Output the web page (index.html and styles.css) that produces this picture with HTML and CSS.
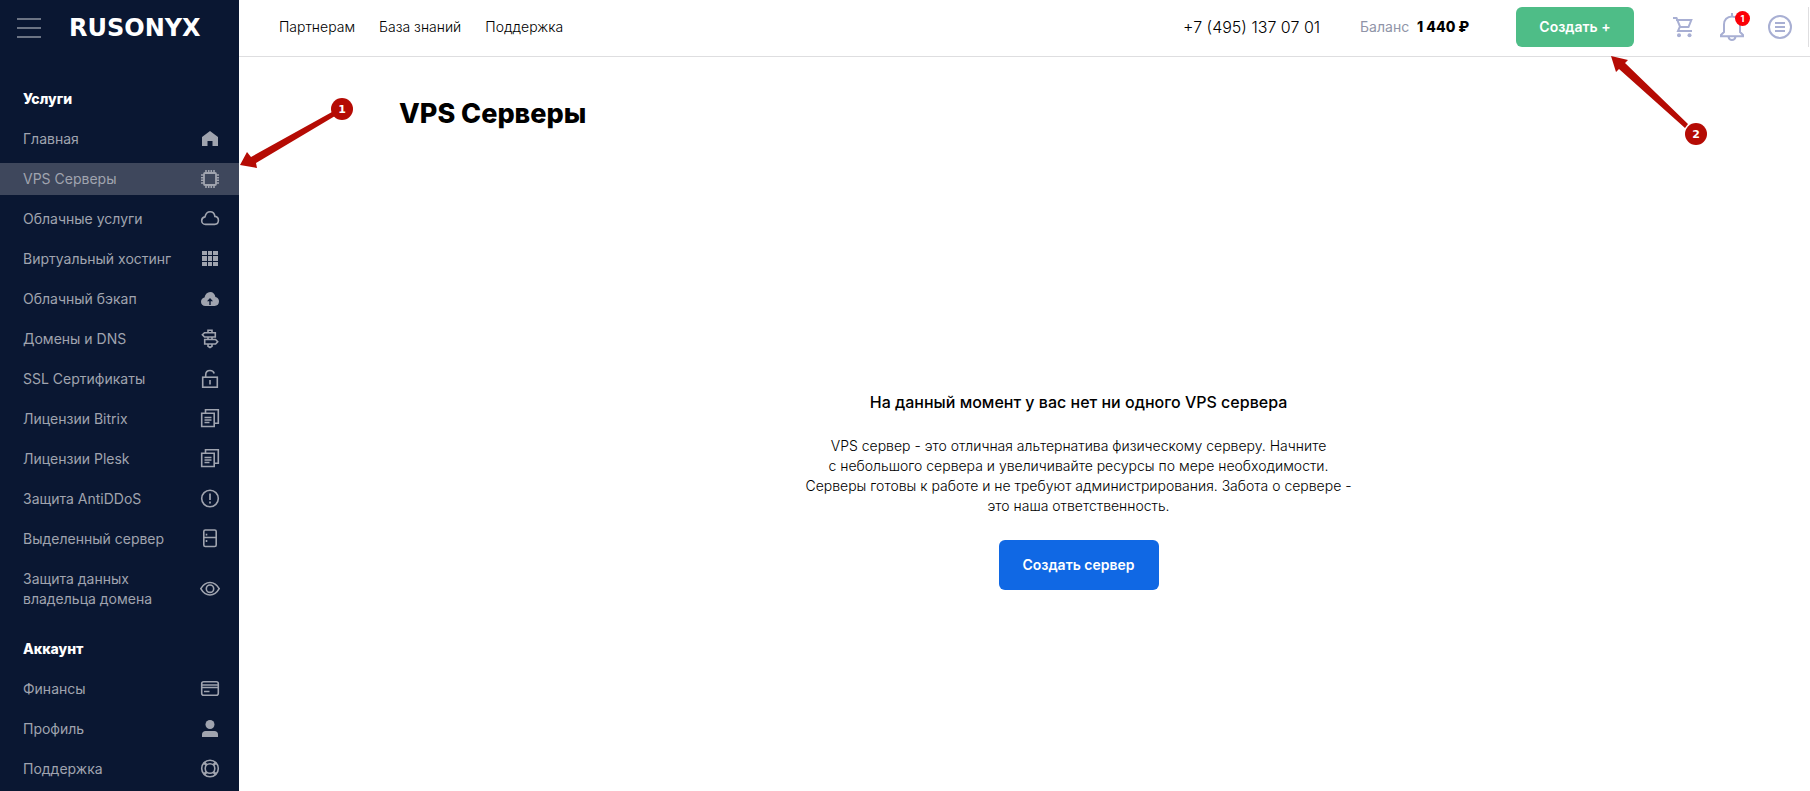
FILE: index.html
```
<!DOCTYPE html>
<html lang="ru">
<head>
    <meta charset="UTF-8">
    <meta name="viewport" content="width=device-width, initial-scale=1.0">
    <title>VPS Серверы</title>
    <link rel="stylesheet" href="styles.css">
</head>
<body>

    <aside class="sidebar">
        <div class="sidebar-top">
            <button type="button" class="burger" aria-label="Меню"><span></span><span></span><span></span></button>
            <a href="#" class="logo">RUSONYX</a>
        </div>

        <nav class="menu">
            <h2>Услуги</h2>
            <a href="#">Главная
                <svg viewBox="0 0 20 20"><path class="fill" d="M10 2 18 8V17H12.500V12H7.500V17H2V8Z"/></svg>
            </a>
            <a href="#" class="active">VPS Серверы
                <svg viewBox="0 0 20 20"><rect x="4" y="4" width="12" height="12" rx="1" stroke-width="1.800"/><path d="M6 1V4M8.700 1V4M11.300 1V4M14 1V4M6 16V19M8.700 16V19M11.300 16V19M14 16V19M1 6H4M1 8.700H4M1 11.300H4M1 14H4M16 6H19M16 8.700H19M16 11.300H19M16 14H19"/></svg>
            </a>
            <a href="#">Облачные услуги
                <svg viewBox="0 0 20 20"><path d="M5.500 15.400C3.200 15.400 1.700 13.700 1.700 11.700C1.700 9.700 3 8.200 5 7.900C5.600 5 7.500 2.800 10.200 2.800C12.800 2.800 14.500 4.600 14.900 7.400C17 7.600 18.400 9.200 18.400 11.300C18.400 13.700 16.800 15.400 14.600 15.400Z"/></svg>
            </a>
            <a href="#">Виртуальный хостинг
                <svg viewBox="0 0 20 20"><path class="fill" d="M2 2H7V6H2ZM8 2H12V6H8ZM13 2H18V6H13ZM2 7H7V12H2ZM8 7H12V12H8ZM13 7H18V12H13ZM2 13H7V17H2ZM8 13H12V17H8ZM13 13H18V17H13Z"/></svg>
            </a>
            <a href="#">Облачный бэкап
                <svg viewBox="0 0 20 20"><path class="fill" fill-rule="evenodd" d="M5.500 17C2.700 17 1 15.200 1 12.800C1 10.600 2.400 9 4.500 8.500C5.200 5.200 7.300 3 10.200 3C13 3 15 5 15.400 8C17.600 8.400 19 10 19 12.300C19 15.100 17.300 17 14.600 17ZM10 9 7 12.300H9.300V16H10.700V12.300H13Z"/></svg>
            </a>
            <a href="#">Домены и DNS
                <svg viewBox="0 0 20 20"><path d="M8 3.500V1.200H12V3.500M4.500 3.700H15.300V8H4.500L2.400 5.800ZM8 8V10.200M12 8V10.200M4.700 10.500H15.600L17.700 12.700 15.600 15H4.700ZM8 15.200V17.300L10 18.500 12 17.300V15.200"/></svg>
            </a>
            <a href="#">SSL Сертификаты
                <svg viewBox="0 0 20 20"><rect x="2.700" y="8.200" width="14.600" height="10"/><path d="M5.700 8V6C5.700 3.300 7.500 1.500 10 1.500C12.200 1.500 13.700 2.700 14.200 4.500M10 11V15.500"/></svg>
            </a>
            <a href="#">Лицензии Bitrix
                <svg viewBox="0 0 20 20"><path d="M1.700 4.200H14.200V17.500H1.700ZM5.500 4V.8H18.300V14.300H14.500M4.500 8.500H11.500M4.500 11H11.500M4.500 13.500H9.500"/></svg>
            </a>
            <a href="#">Лицензии Plesk
                <svg viewBox="0 0 20 20"><path d="M1.700 4.200H14.200V17.500H1.700ZM5.500 4V.8H18.300V14.300H14.500M4.500 8.500H11.500M4.500 11H11.500M4.500 13.500H9.500"/></svg>
            </a>
            <a href="#">Защита AntiDDoS
                <svg viewBox="0 0 20 20"><circle cx="10" cy="9.500" r="8.300"/><path d="M10 4.500V11M10 12.500V14.500" stroke-width="1.700"/></svg>
            </a>
            <a href="#">Выделенный сервер
                <svg viewBox="0 0 20 20"><rect x="3.800" y="1" width="12.400" height="16.500" rx="1.500"/><path d="M4 8.500H16M6.500 4.800V6.500M6.500 11V13"/></svg>
            </a>
            <a href="#">Защита данных<br>владельца домена
                <svg viewBox="0 0 20 20"><path d="M.8 9.700C3 5.800 6.200 3.500 10 3.500S17 5.800 19.200 9.700C17 13.600 13.800 16 10 16S3 13.600.8 9.700Z"/><circle cx="10" cy="9.700" r="3.700"/></svg>
            </a>

            <h2 class="second">Аккаунт</h2>
            <a href="#">Финансы
                <svg viewBox="0 0 20 20"><rect x="1.700" y="2.700" width="16.600" height="13.600" rx="2"/><path d="M2 6H18M2 8.500H18M4 12.500H9.500"/></svg>
            </a>
            <a href="#">Профиль
                <svg viewBox="0 0 20 20"><circle class="fill" cx="10" cy="5.500" r="4.500"/><path class="fill" d="M2 18V15.500C2 13.300 3.500 12 5.500 12H14.500C16.500 12 18 13.300 18 15.500V18Z"/></svg>
            </a>
            <a href="#">Поддержка
                <svg viewBox="0 0 20 20"><circle cx="10" cy="9.500" r="8.300"/><circle cx="10" cy="9.500" r="4.800"/><path d="M4 3.500 6.700 6.200M16 3.500 13.300 6.200M4 15.500 6.700 12.800M16 15.500 13.300 12.800" stroke-width="2.500"/></svg>
            </a>
        </nav>
    </aside>

    <div class="page">
        <header>
            <nav class="links">
                <a href="#">Партнерам</a>
                <a href="#">База знаний</a>
                <a href="#">Поддержка</a>
            </nav>
            <a href="tel:+74951370701" class="phone">+7 (495) 137 07 01</a>
            <div class="balance">Баланс <b>1 440 ₽</b></div>
            <button type="button" class="create">Создать +</button>
            <div class="tools">
                <button type="button" aria-label="Корзина">
                    <svg viewBox="0 0 24 24"><path d="M1 3H4.500L8 11.500 6 16H20M4 5H19.300L16.500 12H8"/><circle class="dot" cx="7" cy="20.200" r="2"/><circle class="dot" cx="17.500" cy="20.200" r="2"/></svg>
                </button>
                <button type="button" aria-label="Уведомления">
                    <svg class="bell" viewBox="0 0 24 28"><path d="M12 0V3.500M12 3.500C7 3.500 4 7 4 11.500V19L1 22V23.300H23V22L20 19V11.500C20 7 17 3.500 12 3.500ZM8.500 24C9 26 10.300 27 12 27S15 26 15.500 24"/></svg>
                    <span class="badge">1</span>
                </button>
                <button type="button" aria-label="Меню аккаунта">
                    <svg viewBox="0 0 24 24"><circle cx="12" cy="12" r="11"/><path d="M7 8H17M7 12H17M7 16H17"/></svg>
                </button>
            </div>
        </header>

        <main>
            <h1>VPS Серверы</h1>
            <section class="empty">
                <h3>На данный момент у вас нет ни одного VPS сервера</h3>
                <p>VPS сервер - это отличная альтернатива физическому серверу. Начните<br>
                    с небольшого сервера и увеличивайте ресурсы по мере необходимости.<br>
                    Серверы готовы к работе и не требуют администрирования. Забота о сервере -<br>
                    это наша ответственность.</p>
                <button type="button" class="create-server">Создать сервер</button>
            </section>
        </main>
    </div>

    <!-- Numbered hints over the page -->
    <svg class="hint hint-menu" viewBox="0 0 114 72" width="114" height="72">
        <path d="M93 14 96 18 17 65 18 70 1 67 8 54 12 59Z"/>
        <circle cx="103" cy="11" r="11"/>
        <text x="103" y="15">1</text>
    </svg>
    <svg class="hint hint-create" viewBox="0 0 96 90" width="96" height="90">
        <path d="M77 68 74 72 8 13 5 16 0 0 17 4 14 7Z"/>
        <circle cx="85" cy="78" r="11"/>
        <text x="85" y="82">2</text>
    </svg>

</body>
</html>
```
FILE: styles.css
```
body {
    display: flex;
    min-height: 100vh;
    margin: 0;
    position: relative;
    font-family: Inter, "Open Sans", sans-serif;
    font-size: 14px;
    line-height: 20px;
    color: #000;
    background-color: #fff;
}

* {
    box-sizing: border-box;
}

a {
    color: inherit;
    text-decoration: none;
}

button {
    padding: 0;
    border: none;
    background: none;
    font: inherit;
    cursor: pointer;
}

svg {
    fill: none;
    stroke: currentColor;
}

/* Sidebar */
.sidebar {
    flex: 0 0 239px;
    background-color: #0a1732;
    color: #a0a4af;
}

.sidebar-top {
    display: flex;
    align-items: center;
    gap: 28px;
    height: 55px;
    padding-left: 17px;
}

.burger {
    display: grid;
    gap: 7px;
    width: 24px;
}

.burger span {
    height: 2px;
    background-color: #6c7484;
}

.logo {
    font-family: "DejaVu Sans", sans-serif;
    font-size: 24px;
    font-weight: bold;
    color: #fff;
}

.menu {
    display: grid;
    gap: 8px;
    padding: 28px 0 6px;
}

.menu h2 {
    margin: 0;
    padding: 6px 23px;
    font-size: 14px;
    font-weight: 800;
    color: #fff;
}

.menu .second {
    margin-top: 10px;
}

.menu a {
    display: flex;
    align-items: center;
    padding: 6px 19px 6px 23px;
}

.menu .active {
    background-color: #3e475c;
}

.menu svg {
    width: 20px;
    height: 20px;
    margin-left: auto;
    stroke-width: 1.6;
}

.menu .fill {
    fill: currentColor;
    stroke: none;
}

/* Header */
.page {
    flex: 1;
    display: flex;
    flex-direction: column;
}

header {
    display: flex;
    align-items: center;
    height: 57px;
    padding: 0 1px 2px 40px;
    border-bottom: 1px solid #dedee0;
}

.links {
    display: flex;
    gap: 24px;
    margin-right: auto;
    font-weight: 300;
}

.phone {
    font-size: 16px;
    font-weight: 300;
}

.balance {
    margin: 0 47px 0 40px;
    color: #9094a8;
}

.balance b {
    margin-left: 4px;
    font-weight: 800;
    color: #000;
}

.create {
    width: 118px;
    height: 40px;
    border-radius: 6px;
    background-color: #4ebd87;
    font-weight: 600;
    color: #fff;
}

.tools {
    display: flex;
    align-items: center;
    gap: 24px;
    height: 40px;
    margin-left: 38px;
    padding-right: 16px;
    border-right: 1px solid #dedee0;
    color: #a8afd3;
}

.tools button {
    display: flex;
    position: relative;
    color: inherit;
}

.tools svg {
    width: 24px;
    height: 24px;
    stroke-width: 2;
}

.tools .bell {
    height: 28px;
}

.tools .dot {
    fill: currentColor;
    stroke: none;
}

.badge {
    position: absolute;
    top: -2px;
    right: -6px;
    width: 15px;
    height: 15px;
    border-radius: 50%;
    background-color: #fb0007;
    font-size: 9px;
    font-weight: bold;
    line-height: 15px;
    color: #fff;
}

/* Content */
main {
    flex: 1;
    padding: 39px 52px 40px 160px;
}

h1 {
    margin: 0;
    font-size: 27px;
    font-weight: 800;
    line-height: 36px;
}

.empty {
    padding-top: 260px;
    text-align: center;
}

h3 {
    margin: 0;
    font-size: 16px;
    font-weight: 500;
}

p {
    margin: 24px 0;
    font-weight: 300;
}

.create-server {
    width: 160px;
    height: 50px;
    border-radius: 6px;
    background-color: #1068e4;
    font-weight: 600;
    color: #fff;
}

/* Hints */
.hint {
    position: absolute;
    fill: #b50b04;
    stroke: none;
}

.hint text {
    font: bold 11px "DejaVu Sans", sans-serif;
    text-anchor: middle;
    fill: #fff;
}

.hint-menu {
    top: 98px;
    left: 239px;
}

.hint-create {
    top: 56px;
    right: 103px;
}
```
